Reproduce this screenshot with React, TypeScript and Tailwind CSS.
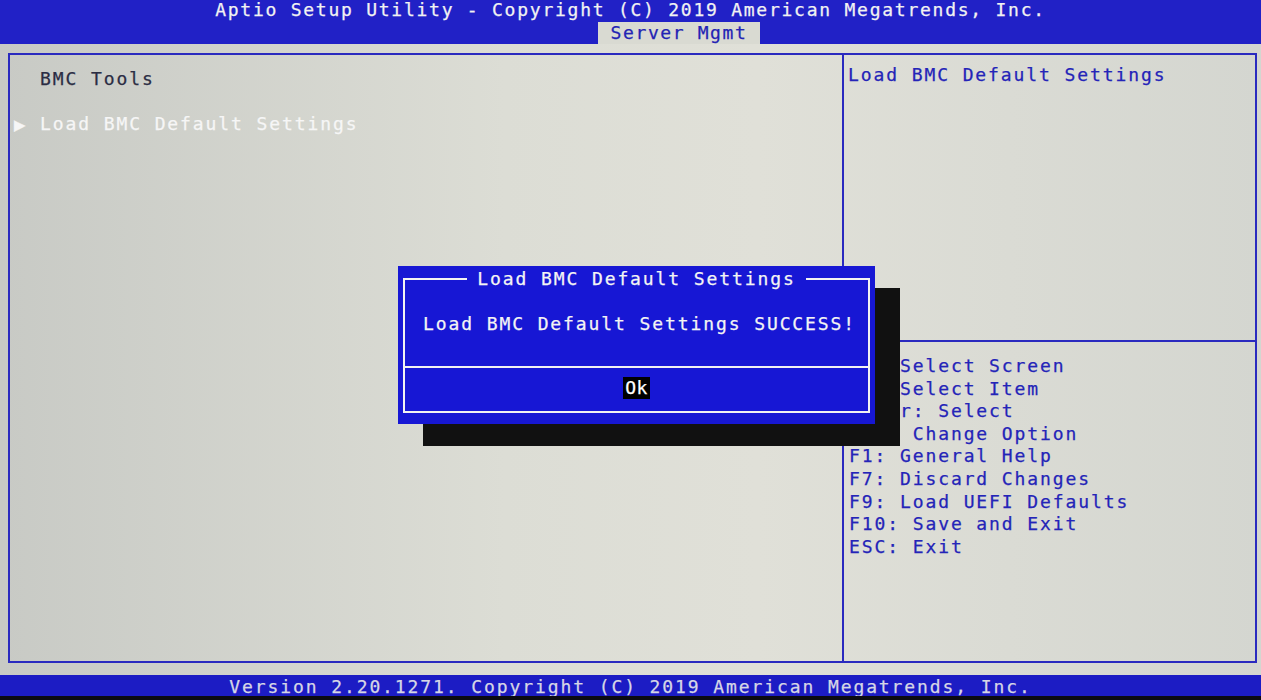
const mono = "font-['DejaVu_Sans_Mono','Liberation_Mono',monospace]";

const helpKeys = [
  '→←: Select Screen',
  '↑↓: Select Item',
  'Enter: Select',
  '+/-: Change Option',
  'F1: General Help',
  'F7: Discard Changes',
  'F9: Load UEFI Defaults',
  'F10: Save and Exit',
  'ESC: Exit',
];

function Dialog() {
  return (
    <div className="absolute left-[398px] top-[266px] w-[477px] h-[158px] bg-[#1717d4] shadow-[25px_22px_0_0_#111111] px-[5px] pt-[12px] pb-[11px]">
      <div className="relative h-full border-2 border-[#f2f2f2] flex flex-col">
        {/* title sits on the top frame line */}
        <div className="absolute -top-[12px] left-0 right-0 flex justify-center">
          <span className="bg-[#1717d4] px-[10px] text-[#f4f4f4] text-[18px] leading-[22px] tracking-[1.9px]">
            Load BMC Default Settings
          </span>
        </div>
        <div className="h-[86px] pl-[18px] pt-[33px] text-[#f4f4f4] text-[18px] leading-[22px] tracking-[1.9px]">
          Load BMC Default Settings SUCCESS!
        </div>
        <div className="border-t-2 border-[#f2f2f2] flex-1 flex items-center justify-center">
          <span className="bg-black text-white text-[18px] leading-[22px] tracking-[0.5px] px-[2px] -mt-[4px]">Ok</span>
        </div>
      </div>
    </div>
  );
}

export default function App() {
  return (
    <div className={`${mono} relative w-[1261px] h-[700px] overflow-hidden flex flex-col [-webkit-text-stroke:0.25px_currentColor] bg-[linear-gradient(90deg,#c8cac5_0%,#dcddd5_40%,#e0e0d8_60%,#d4d6d0_100%)]`}>
      {/* top title bar */}
      <header className="h-[44px] bg-[#2121c6] flex flex-col">
        <div className="h-[22px] text-center text-[#f2f2f2] text-[18px] leading-[20px] tracking-[1.75px]">
          Aptio Setup Utility - Copyright (C) 2019 American Megatrends, Inc.
        </div>
        <div className="h-[22px] pl-[598px] flex">
          <div className="w-[162px] bg-[#d9dad2] text-[#2323b4] text-center text-[18px] leading-[22px] tracking-[1.6px]">
            Server Mgmt
          </div>
        </div>
      </header>

      {/* main panels */}
      <main className="mt-[9px] ml-[8px] mr-[4px] h-[610px] border-2 border-[#2a2abf] flex">
        <section className="w-[834px] border-r-2 border-[#2a2abf] pt-[13px] text-[18px] leading-[22.6px] tracking-[1.9px]">
          <div className="pl-[30px] text-[#2b2d44]">BMC Tools</div>
          <div className="h-[22.6px]" />
          <div className="flex items-center text-[#f6f6f6]">
            <span className="w-[30px] pl-[4px] text-[19px] tracking-normal">▶</span>
            <span>Load BMC Default Settings</span>
          </div>
        </section>

        <aside className="flex-1 flex flex-col text-[#2424b8] text-[18px] tracking-[1.9px]">
          <div className="h-[287px] pl-[4px] pt-[9px] leading-[22px] border-b-2 border-[#2a2abf]">
            Load BMC Default Settings
          </div>
          <ul className="pl-[5px] pt-[13px] leading-[22.6px] whitespace-pre">
            {helpKeys.map((k) => (
              <li key={k}>{k}</li>
            ))}
          </ul>
        </aside>
      </main>

      {/* bottom version bar */}
      <footer className="mt-[12px] h-[21px] bg-[#1c1cc4] text-center text-[#d6d6e6] text-[18px] leading-[23px] tracking-[1.9px]">
        Version 2.20.1271. Copyright (C) 2019 American Megatrends, Inc.
      </footer>
      <div className="flex-1 bg-[#0b0b12]" />

      <Dialog />
    </div>
  );
}
